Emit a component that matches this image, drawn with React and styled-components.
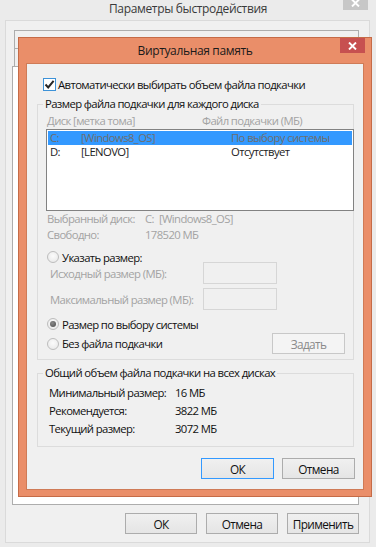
import styled, { createGlobalStyle } from "styled-components";

const font = `"Open Sans", "Noto Sans", sans-serif`;

const GlobalStyle = createGlobalStyle`
  html, body {
    margin: 0;
    padding: 0;
    background: #ebebeb;
  }
  * {
    box-sizing: border-box;
  }
`;

const Screen = styled.div`
  position: relative;
  width: 376px;
  height: 547px;
  overflow: hidden;
  background: #ebebeb;
  font-family: ${font};
  font-size: 11.3px;
  letter-spacing: -0.6px;
  white-space: nowrap;
  color: #111;
`;

/* ---------- back window: Параметры быстродействия ---------- */

const BackWindow = styled.div`
  display: flex;
  flex-direction: column;
  height: 100%;
`;

const TitleBar = styled.div`
  display: grid;
  grid-template-columns: 1fr auto 1fr;
  align-items: center;
  height: ${p => p.$height}px;
  padding: 0 ${p => p.$side}px;
  flex-shrink: 0;
`;

const WindowTitle = styled.div`
  grid-column: 2;
  font-size: 12px;
  letter-spacing: -0.35px;
  color: ${p => (p.$inactive ? "#3a3a3a" : "#1a1a1a")};
  padding-bottom: ${p => p.$shift || 0}px;
`;

const CloseButton = styled.div`
  grid-column: 3;
  justify-self: end;
  align-self: start;
  width: 25px;
  height: 15px;
  margin-top: ${p => p.$offset || 0}px;
  display: flex;
  align-items: center;
  justify-content: center;
  background: ${p => (p.$inactive ? "#c7c7c7" : "#c75050")};
`;

const BackClient = styled.div`
  flex: 1;
  display: flex;
  flex-direction: column;
  margin: 0 6px 4px 5px;
  padding: 9px 10px 8px 6px;
  background: #f0f0f0;
  border: 1px solid #dadada;
`;

const TabStrip = styled.div`
  height: 36px;
  margin-left: 2px;
  border: 1px solid #adadad;
  border-bottom: none;
`;

const TabRow = styled.div`
  height: 18px;
  padding: 4px 0 0 73px;
  line-height: 14px;
  font-size: 12px;
  border-bottom: 1px solid #adadad;
`;

const TabPanel = styled.div`
  flex: 1;
  background: #fff;
  border: 1px solid #adadad;
`;

const ButtonRow = styled.div`
  display: flex;
  justify-content: flex-end;
  gap: ${p => p.$gap}px;
  margin-top: ${p => p.$mt}px;
  padding-right: ${p => p.$pr || 0}px;
  padding-bottom: ${p => p.$pb || 0}px;
`;

const Button = styled.div`
  width: ${p => p.$w || 73}px;
  height: 21px;
  display: flex;
  align-items: center;
  justify-content: center;
  border: 1px solid ${p => (p.$default ? "#3399ff" : p.$disabled ? "#c8c8c8" : "#acacac")};
  background: ${p => (p.$disabled ? "#f4f4f4" : "linear-gradient(#f0f0f0, #e5e5e5)")};
  color: ${p => (p.$disabled ? "#8a8a8a" : "#111")};
  font-size: 11.8px;
`;

/* ---------- front dialog: Виртуальная память ---------- */

const Dialog = styled.div`
  position: absolute;
  left: 18px;
  top: 37px;
  width: 354px;
  height: 460px;
  display: flex;
  flex-direction: column;
  background: #ea8e69;
  border: 1px solid #c56b47;
`;

const DialogClient = styled.div`
  flex: 1;
  display: flex;
  flex-direction: column;
  margin: 0 7px 6px 7px;
  background: #f0f0f0;
  border: 1px solid #cf7b57;
`;

const CheckRow = styled.label`
  display: flex;
  align-items: center;
  gap: 2px;
  height: 14px;
  margin: 13px 0 0 16px;
`;

const CheckBox = styled.span`
  width: 13px;
  height: 13px;
  display: flex;
  align-items: center;
  justify-content: center;
  background: #fff;
  border: 1px solid #3d92d8;
`;

const Group = styled.fieldset`
  margin: ${p => p.$mt}px 9px 0 10px;
  padding: 0 0 ${p => p.$pb}px;
  border: 1px solid #dcdcdc;
  min-width: 0;
`;

const Legend = styled.legend`
  margin-left: 5px;
  padding: 0 2px;
  line-height: 14px;
  color: #111;
`;

const ColumnHeader = styled.div`
  display: grid;
  grid-template-columns: 155px 1fr;
  height: 14px;
  line-height: 14px;
  margin-top: 3px;
  padding-left: 9px;
  color: #a3a3a3;
`;

const ListBox = styled.div`
  height: 82px;
  margin: 1px -1px 0 8px;
  padding: 1px;
  background: #fff;
  border: 1px solid #828282;
`;

const ListRow = styled.div`
  display: grid;
  grid-template-columns: 31px 150px 1fr;
  height: 14px;
  line-height: 14px;
  padding-left: 2px;
  background: ${p => (p.$selected ? "#3399ff" : "transparent")};
  color: ${p => (p.$selected ? "#6e6e6e" : "#222")};
`;

const InfoRow = styled.div`
  display: grid;
  grid-template-columns: 98px 1fr;
  height: 16px;
  line-height: 16px;
  padding-left: 9px;
  color: #a3a3a3;
`;

const Gap = styled.span`
  display: inline-block;
  width: ${p => p.$w}px;
`;

const RadioRow = styled.label`
  display: flex;
  align-items: center;
  gap: 3px;
  height: 14px;
  margin: ${p => p.$mt || 0}px 0 0 9px;
`;

const Radio = styled.span`
  position: relative;
  width: 12px;
  height: 12px;
  border-radius: 50%;
  border: 1px solid #bdbdbd;
  background: radial-gradient(circle at 50% 40%, #fbfbfb, #e6e6e6);

  &::after {
    content: "";
    display: ${p => (p.$checked ? "block" : "none")};
    position: absolute;
    left: 2px;
    top: 2px;
    width: 6px;
    height: 6px;
    border-radius: 50%;
    background: radial-gradient(circle at 40% 35%, #8a8a8a, #4c4c4c);
  }
`;

const SizeRow = styled.div`
  display: grid;
  grid-template-columns: 153px 74px;
  align-items: center;
  height: 22px;
  margin-top: ${p => p.$mt}px;
  padding-left: 12px;
  color: #a3a3a3;
`;

const SizeInput = styled.span`
  height: 22px;
  border: 1px solid #d6d6d6;
  background: #f0f0f0;
`;

const SplitRow = styled.div`
  display: flex;
  align-items: center;
  justify-content: space-between;
  margin: 2px 8px 0 0;
`;

const SummaryRow = styled.div`
  display: grid;
  grid-template-columns: 126px 1fr;
  height: 18px;
  line-height: 18px;
  padding-left: 11px;
  margin-top: ${p => p.$mt || 0}px;
`;

const CloseGlyph = () => (
  <svg width="9" height="8" viewBox="0 0 9 8">
    <path d="M1 0.5 L8 7.5 M8 0.5 L1 7.5" stroke="#fff" strokeWidth="1.9" fill="none" />
  </svg>
);

const CheckGlyph = () => (
  <svg width="11" height="11" viewBox="0 0 11 11">
    <path d="M1.5 5.5 L4.2 8.4 L9.6 1.8" stroke="#262626" strokeWidth="2" fill="none" />
  </svg>
);

const drives = [
  { letter: "C:", label: "[Windows8_OS]", size: "По выбору системы", selected: true },
  { letter: "D:", label: "[LENOVO]", size: "Отсутствует" },
];

const totals = [
  ["Минимальный размер:", "16 МБ"],
  ["Рекомендуется:", "3822 МБ"],
  ["Текущий размер:", "3072 МБ"],
];

export default function App() {
  return (
    <>
      <GlobalStyle />
      <Screen>
        <BackWindow>
          <TitleBar $height={20} $side={8}>
            <WindowTitle $inactive $shift={4}>Параметры быстродействия</WindowTitle>
            <CloseButton $inactive $offset={-5}>
              <CloseGlyph />
            </CloseButton>
          </TitleBar>
          <BackClient>
            <TabStrip>
              <TabRow>Дополнительно</TabRow>
            </TabStrip>
            <TabPanel />
            <ButtonRow $gap={9} $mt={8}>
              <Button $w={72}>ОК</Button>
              <Button $w={72}>Отмена</Button>
              <Button $w={72}>Применить</Button>
            </ButtonRow>
          </BackClient>
        </BackWindow>

        <Dialog>
          <TitleBar $height={25} $side={6}>
            <WindowTitle>Виртуальная память</WindowTitle>
            <CloseButton>
              <CloseGlyph />
            </CloseButton>
          </TitleBar>
          <DialogClient>
            <CheckRow>
              <CheckBox>
                <CheckGlyph />
              </CheckBox>
              Автоматически выбирать объем файла подкачки
            </CheckRow>

            <Group $mt={6} $pb={5}>
              <Legend>Размер файла подкачки для каждого диска</Legend>
              <ColumnHeader>
                <span>Диск [метка тома]</span>
                <span>Файл подкачки (МБ)</span>
              </ColumnHeader>
              <ListBox>
                {drives.map(d => (
                  <ListRow key={d.letter} $selected={d.selected}>
                    <span>{d.letter}</span>
                    <span>{d.label}</span>
                    <span>{d.size}</span>
                  </ListRow>
                ))}
              </ListBox>
              <InfoRow>
                <span>Выбранный диск:</span>
                <span>
                  C:<Gap $w={5} />[Windows8_OS]
                </span>
              </InfoRow>
              <InfoRow>
                <span>Свободно:</span>
                <span>178520 МБ</span>
              </InfoRow>
              <RadioRow $mt={7}>
                <Radio />
                Указать размер:
              </RadioRow>
              <SizeRow $mt={-2}>
                <span>Исходный размер (МБ):</span>
                <SizeInput />
              </SizeRow>
              <SizeRow $mt={4}>
                <span>Максимальный размер (МБ):</span>
                <SizeInput />
              </SizeRow>
              <RadioRow $mt={7}>
                <Radio $checked />
                Размер по выбору системы
              </RadioRow>
              <SplitRow>
                <RadioRow>
                  <Radio />
                  Без файла подкачки
                </RadioRow>
                <Button $disabled>Задать</Button>
              </SplitRow>
            </Group>

            <Group $mt={6} $pb={8}>
              <Legend>Общий объем файла подкачки на всех дисках</Legend>
              {totals.map(([label, value], i) => (
                <SummaryRow key={label} $mt={i === 0 ? 4 : 0}>
                  <span>{label}</span>
                  <span>{value}</span>
                </SummaryRow>
              ))}
            </Group>

            <ButtonRow $gap={8} $mt={11} $pr={8} $pb={10}>
              <Button $default>ОК</Button>
              <Button>Отмена</Button>
            </ButtonRow>
          </DialogClient>
        </Dialog>
      </Screen>
    </>
  );
}
